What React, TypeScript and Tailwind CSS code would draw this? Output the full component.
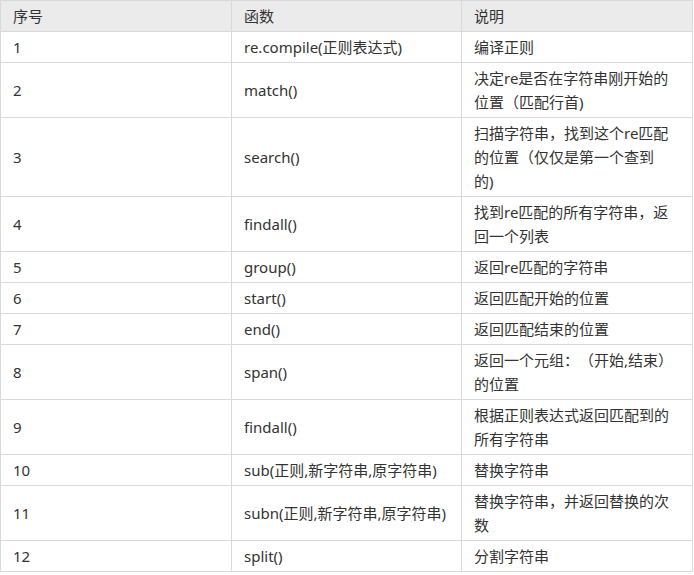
const rows = [
  { no: "1", fn: "re.compile(正则表达式)", desc: "编译正则" },
  { no: "2", fn: "match()", desc: "决定re是否在字符串刚开始的位置（匹配行首)" },
  { no: "3", fn: "search()", desc: "扫描字符串，找到这个re匹配的位置（仅仅是第一个查到的)" },
  { no: "4", fn: "findall()", desc: "找到re匹配的所有字符串，返回一个列表" },
  { no: "5", fn: "group()", desc: "返回re匹配的字符串" },
  { no: "6", fn: "start()", desc: "返回匹配开始的位置" },
  { no: "7", fn: "end()", desc: "返回匹配结束的位置" },
  { no: "8", fn: "span()", desc: "的位置", lead: "返回一个元组：（开始,结束）" },
  { no: "9", fn: "findall()", desc: "根据正则表达式返回匹配到的所有字符串" },
  { no: "10", fn: "sub(正则,新字符串,原字符串)", desc: "替换字符串" },
  { no: "11", fn: "subn(正则,新字符串,原字符串)", desc: "替换字符串，并返回替换的次数" },
  { no: "12", fn: "split()", desc: "分割字符串" },
];

const App = () => {
  return (
    <div className="bg-white min-h-screen font-['Noto_Sans','Noto_Sans_CJK_SC',sans-serif] text-[15px] leading-6 text-[#333] [text-spacing-trim:space-all]">
      <table className="w-[692px] table-fixed border-collapse">
        <colgroup>
          <col className="w-[231px]" />
          <col className="w-[230px]" />
          <col className="w-[231px]" />
        </colgroup>
        <thead>
          <tr className="bg-[#ebebeb]">
            <th className="border border-[#d9d9d9] px-3 py-[3px] text-left font-normal">序号</th>
            <th className="border border-[#d9d9d9] px-3 py-[3px] text-left font-normal">函数</th>
            <th className="border border-[#d9d9d9] pl-3 pr-[19px] py-[3px] text-left font-normal">说明</th>
          </tr>
        </thead>
        <tbody>
          {rows.map((row) => (
            <tr key={row.no}>
              <td className="border border-[#d9d9d9] px-3 py-[3px]">{row.no}</td>
              <td className="border border-[#d9d9d9] px-3 py-[3px] whitespace-nowrap">{row.fn}</td>
              <td className="border border-[#d9d9d9] pl-3 pr-[19px] py-[3px]">
                {row.lead && <span className="block whitespace-nowrap">{row.lead}</span>}
                {row.desc}
              </td>
            </tr>
          ))}
        </tbody>
      </table>
    </div>
  );
};

export default App;
